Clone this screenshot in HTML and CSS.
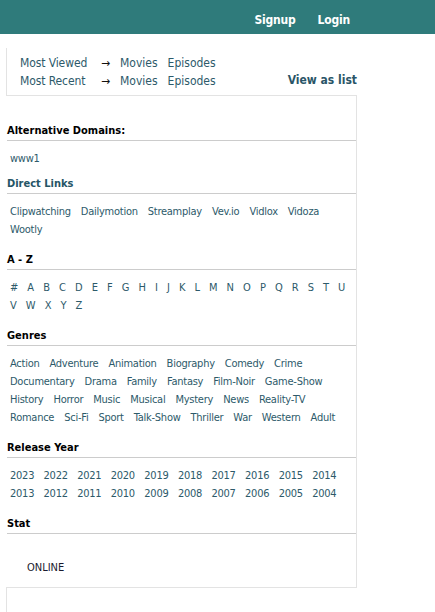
FILE: index.html
```html
<!DOCTYPE html>
<html>
<head>
<meta charset="utf-8">
<link rel="stylesheet" href="styles.css">
</head>
<body>
<header class="topbar">
  <nav class="topnav">
    <a class="topnav-link" href="#">Signup</a>
    <a class="topnav-link" href="#">Login</a>
  </nav>
</header>
<div class="page">
  <section class="browse">
    <div class="browse-rows">
      <div class="browse-row">
        <a class="link browse-label" href="#">Most Viewed</a>
        <span class="arrow">&rarr;</span>
        <a class="link browse-opt" href="#">Movies</a>
        <a class="link browse-opt" href="#">Episodes</a>
      </div>
      <div class="browse-row">
        <a class="link browse-label" href="#">Most Recent</a>
        <span class="arrow">&rarr;</span>
        <a class="link browse-opt" href="#">Movies</a>
        <a class="link browse-opt" href="#">Episodes</a>
      </div>
    </div>
    <a class="view-list" href="#">View as list</a>
  </section>
  <aside class="sidebar">
    <h3 class="side-title">Alternative Domains:</h3>
    <div class="side-list side-list-tight">
      <a class="link dom" href="#">www1</a>
    </div>
    <h3 class="side-title side-title-teal">Direct Links</h3>
    <div class="side-list">
      <a class="link" href="#">Clipwatching</a><a class="link" href="#">Dailymotion</a><a class="link" href="#">Streamplay</a><a class="link" href="#">Vev.io</a><a class="link" href="#">Vidlox</a><a class="link" href="#">Vidoza</a><a class="link" href="#">Wootly</a>
    </div>
    <h3 class="side-title">A - Z</h3>
    <div class="side-list az">
      <a class="link" href="#">#</a><a class="link" href="#">A</a><a class="link" href="#">B</a><a class="link" href="#">C</a><a class="link" href="#">D</a><a class="link" href="#">E</a><a class="link" href="#">F</a><a class="link" href="#">G</a><a class="link" href="#">H</a><a class="link" href="#">I</a><a class="link" href="#">J</a><a class="link" href="#">K</a><a class="link" href="#">L</a><a class="link" href="#">M</a><a class="link" href="#">N</a><a class="link" href="#">O</a><a class="link" href="#">P</a><a class="link" href="#">Q</a><a class="link" href="#">R</a><a class="link" href="#">S</a><a class="link" href="#">T</a><a class="link" href="#">U</a><a class="link" href="#">V</a><a class="link" href="#">W</a><a class="link" href="#">X</a><a class="link" href="#">Y</a><a class="link" href="#">Z</a>
    </div>
    <h3 class="side-title">Genres</h3>
    <div class="side-list">
      <a class="link" href="#">Action</a><a class="link" href="#">Adventure</a><a class="link" href="#">Animation</a><a class="link" href="#">Biography</a><a class="link" href="#">Comedy</a><a class="link" href="#">Crime</a><a class="link" href="#">Documentary</a><a class="link" href="#">Drama</a><a class="link" href="#">Family</a><a class="link" href="#">Fantasy</a><a class="link" href="#">Film-Noir</a><a class="link" href="#">Game-Show</a><a class="link" href="#">History</a><a class="link" href="#">Horror</a><a class="link" href="#">Music</a><a class="link" href="#">Musical</a><a class="link" href="#">Mystery</a><a class="link" href="#">News</a><a class="link" href="#">Reality-TV</a><a class="link" href="#">Romance</a><a class="link" href="#">Sci-Fi</a><a class="link" href="#">Sport</a><a class="link" href="#">Talk-Show</a><a class="link" href="#">Thriller</a><a class="link" href="#">War</a><a class="link" href="#">Western</a><a class="link" href="#">Adult</a>
    </div>
    <h3 class="side-title">Release Year</h3>
    <div class="side-list years">
      <a class="link" href="#">2023</a><a class="link" href="#">2022</a><a class="link" href="#">2021</a><a class="link" href="#">2020</a><a class="link" href="#">2019</a><a class="link" href="#">2018</a><a class="link" href="#">2017</a><a class="link" href="#">2016</a><a class="link" href="#">2015</a><a class="link" href="#">2014</a><a class="link" href="#">2013</a><a class="link" href="#">2012</a><a class="link" href="#">2011</a><a class="link" href="#">2010</a><a class="link" href="#">2009</a><a class="link" href="#">2008</a><a class="link" href="#">2007</a><a class="link" href="#">2006</a><a class="link" href="#">2005</a><a class="link" href="#">2004</a>
    </div>
    <h3 class="side-title">Stat</h3>
    <div class="stat">ONLINE</div>
  </aside>
  <section class="lower"></section>
</div>
</body>
</html>
```
FILE: styles.css
```css
* { box-sizing: border-box; }
body {
  margin: 0;
  font-family: "DejaVu Sans Condensed", "DejaVu Sans", sans-serif;
  font-size: 11px;
  color: #222;
  background: #fff;
}
a { text-decoration: none; }
.topbar {
  height: 34px;
  background: #2f7b7b;
  display: flex;
  justify-content: flex-end;
  align-items: center;
  padding: 6px 85px 0 0;
}
.topnav { display: flex; gap: 22px; }
.topnav-link {
  color: #fff;
  font-weight: bold;
  font-size: 12px;
  line-height: 16px;
  letter-spacing: -0.2px;
}
.page {
  margin-left: 6px;
  width: 351px;
}
.browse {
  margin-top: 14px;
  height: 48px;
  border-left: 1px solid #e3e3e3;
  border-bottom: 1px solid #e3e3e3;
  display: flex;
  justify-content: space-between;
  padding: 6px 0 0 13px;
  font-size: 12px;
}
.browse-row { display: flex; line-height: 18px; }
.link { color: #2d5a6a; }
.browse-label { width: 81px; letter-spacing: -0.1px; }
.arrow { color: #111; width: 19px; }
.browse-opt { margin-right: 10px; }
.view-list {
  color: #2a5567;
  font-weight: bold;
  font-size: 12px;
  align-self: flex-end;
  line-height: 18px;
  margin-bottom: 6px;
}
.sidebar {
  border-right: 1px solid #e3e3e3;
  padding: 24px 0 0 1px;
}
.side-title {
  margin: 0;
  font-size: 11px;
  font-weight: bold;
  color: #000;
  line-height: 18px;
  padding: 2px 0 0;
  border-bottom: 1px solid #cccccc;
}
.side-title-teal { color: #255566; }
.side-list {
  padding: 9px 0 10px 3px;
  line-height: 18px;
  display: flex;
  flex-wrap: wrap;
  column-gap: 10px;
  letter-spacing: -0.25px;
}
.side-list-tight { padding-bottom: 5px; }
.az { column-gap: 9.3px; }
.years { column-gap: 9.4px; }
.stat {
  padding: 25px 0 10px 20px;
  line-height: 18px;
  color: #1a1a2e;
}
.lower {
  height: 30px;
  border-top: 1px solid #e3e3e3;
  border-left: 1px solid #e3e3e3;
}
```
